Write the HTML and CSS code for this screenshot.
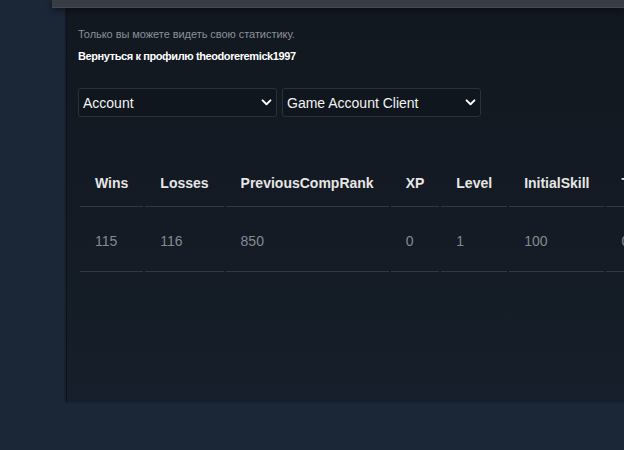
FILE: index.html
```html
<!DOCTYPE html>
<html lang="ru">
<head>
<meta charset="utf-8">
<title>Статистика</title>
<link rel="stylesheet" href="styles.css">
</head>
<body>
<div class="topbar"></div>
<main class="panel">
  <p class="note">Только вы можете видеть свою статистику.</p>
  <p class="back"><a href="#">Вернуться к профилю theodoreremick1997</a></p>
  <div class="filters">
    <div class="sel">
      <select><option>Account</option></select>
      <svg class="chev" viewBox="0 0 12 8" width="11" height="7"><path d="M1.5 1.5 6 6l4.5-4.5" fill="none" stroke="#fff" stroke-width="2.2" stroke-linecap="round" stroke-linejoin="round"/></svg>
    </div>
    <div class="sel">
      <select><option>Game Account Client</option></select>
      <svg class="chev" viewBox="0 0 12 8" width="11" height="7"><path d="M1.5 1.5 6 6l4.5-4.5" fill="none" stroke="#fff" stroke-width="2.2" stroke-linecap="round" stroke-linejoin="round"/></svg>
    </div>
  </div>
  <table class="stats">
    <thead>
      <tr><th>Wins</th><th>Losses</th><th>PreviousCompRank</th><th>XP</th><th>Level</th><th>InitialSkill</th><th>TotalMatches</th></tr>
    </thead>
    <tbody>
      <tr><td>115</td><td>116</td><td>850</td><td>0</td><td>1</td><td>100</td><td>0</td></tr>
    </tbody>
  </table>
</main>
</body>
</html>
```
FILE: styles.css
```css
html, body {
  margin: 0;
  padding: 0;
  overflow: hidden;
}
body {
  background: #1b2637;
  font-family: "Liberation Sans", Arial, sans-serif;
  height: 450px;
}
.topbar {
  margin-left: 52px;
  height: 7px;
  background: #393c44;
  border-bottom: 1px solid #45484f;
  box-shadow: 0 2px 6px rgba(0, 0, 0, 0.45);
  position: relative;
  z-index: 1;
}
.panel {
  display: block;
  margin-left: 66px;
  margin-top: -1px;
  height: 395px;
  box-sizing: border-box;
  padding: 21px 11px 0;
  background: linear-gradient(to bottom, #121820 0%, #141b24 60%, #161f2b 100%);
  border-left: 1px solid #0d1218;
  box-shadow: -1px 0 2px rgba(0, 0, 0, 0.25);
}
.note {
  margin: 0;
  font-size: 11px;
  line-height: 13px;
  color: #8b9099;
  letter-spacing: -0.05px;
}
.back {
  margin: 9px 0 0;
  font-size: 11px;
  line-height: 13px;
  font-weight: bold;
  letter-spacing: -0.4px;
}
.back a {
  color: #ffffff;
  text-decoration: none;
}
.filters {
  display: flex;
  gap: 5px;
  margin-top: 25px;
}
.sel {
  position: relative;
  width: 199px;
}
.sel select {
  appearance: none;
  -webkit-appearance: none;
  width: 100%;
  height: 29px;
  margin: 0;
  padding: 0 24px 0 4px;
  background: #10161d;
  border: 1px solid #2b3139;
  border-radius: 3px;
  color: #f2f2f2;
  font-family: "Liberation Sans", Arial, sans-serif;
  font-size: 14px;
}
.chev {
  position: absolute;
  right: 5px;
  top: 11px;
  pointer-events: none;
}
.stats {
  margin-top: 42px;
  margin-left: 0;
  border-collapse: separate;
  border-spacing: 2px 0;
  white-space: nowrap;
}
.stats th,
.stats td {
  text-align: left;
  padding: 0 15px;
  border-bottom: 1px solid #2b394b;
  font-size: 14px;
}
.stats th {
  height: 47px;
  vertical-align: middle;
  color: #e6e6e6;
  font-weight: bold;
}
.stats td {
  height: 61px;
  padding-top: 3px;
  color: #858a92;
  vertical-align: middle;
}
```
